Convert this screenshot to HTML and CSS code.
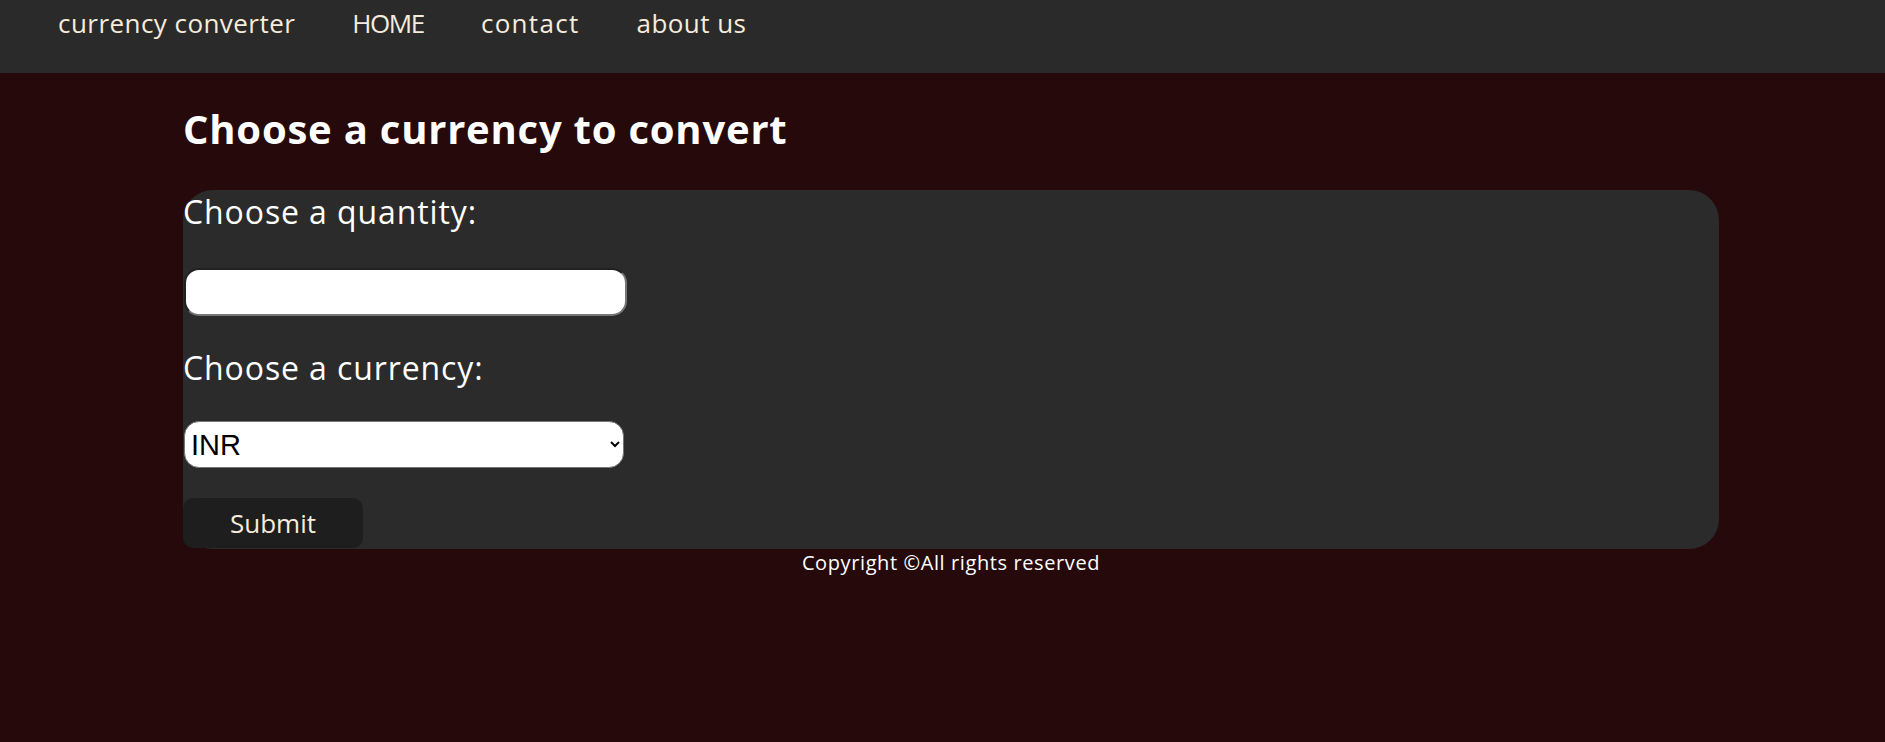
FILE: index.html
```html
<!DOCTYPE html>
<html lang="en">
<head>
<meta charset="utf-8">
<title>Currency Converter</title>
<link rel="stylesheet" href="styles.css">
</head>
<body>
<nav class="navbar">
  <a class="nav-link" href="#">currency converter</a>
  <a class="nav-link nav-caps" href="#">HOME</a>
  <a class="nav-link nav-wide" href="#">contact</a>
  <a class="nav-link" href="#">about us</a>
</nav>
<main class="main">
  <div class="container">
    <h1 class="title">Choose a currency to convert</h1>
    <form class="card">
      <label class="field-label" for="qty">Choose a quantity:</label>
      <input class="qty-input" id="qty" type="text">
      <label class="field-label label-second" for="cur">Choose a currency:</label>
      <select class="cur-select" id="cur">
        <option>INR</option>
        <option>USD</option>
        <option>EUR</option>
      </select>
      <button class="submit-btn" type="button">Submit</button>
    </form>
    <footer class="footer">Copyright ©All rights reserved</footer>
  </div>
</main>
</body>
</html>
```
FILE: styles.css
```css
html, body {
  margin: 0;
  padding: 0;
}
body {
  background: #25090b;
  font-family: "Open Sans", "Liberation Sans", sans-serif;
  color: #ffffff;
  min-height: 742px;
}
.navbar {
  background: #2a2a2a;
  height: 73px;
  box-sizing: border-box;
  display: flex;
  align-items: flex-start;
  gap: 57px;
  padding: 5px 0 0 58px;
}
.nav-link {
  color: #f7ecdc;
  text-decoration: none;
  font-size: 26px;
  line-height: 36px;
  letter-spacing: 0.45px;
}
.nav-caps {
  letter-spacing: -1.4px;
}
.nav-wide {
  letter-spacing: 1.3px;
}
.main {
  padding-left: 17px;
}
.container {
  max-width: 1536px;
  margin: 0 auto;
}
.title {
  margin: 32px 0 37px 0;
  font-size: 40px;
  line-height: 48px;
  font-weight: 700;
  letter-spacing: 0.78px;
  color: #ffffff;
}
.card {
  background: #2b2b2b;
  border-radius: 30px;
  display: flex;
  flex-direction: column;
  align-items: flex-start;
  height: 359px;
  box-sizing: border-box;
}
.field-label {
  font-size: 32px;
  line-height: 44px;
  letter-spacing: 0.9px;
  color: #ffffff;
}
.qty-input {
  margin: 34px 0 0 1px;
  width: 443px;
  height: 48px;
  box-sizing: border-box;
  border: 2px inset #767676;
  border-radius: 15px;
  background: #ffffff;
  font-size: 24px;
  padding: 0 8px;
}
.label-second {
  margin-top: 30px;
}
.cur-select {
  margin: 31px 0 0 1px;
  width: 440px;
  height: 47px;
  box-sizing: border-box;
  border: 1px solid #767676;
  border-radius: 15px;
  background-color: #ffffff;
  color: #000000;
  font-family: "Liberation Sans", Arial, sans-serif;
  font-size: 29px;
  padding: 0 2px;
}
.submit-btn {
  margin-top: 30px;
  width: 180px;
  height: 50px;
  border: none;
  border-radius: 10px;
  background: #1e1e1e;
  color: #f7ecdc;
  font-family: "Open Sans", "Liberation Sans", sans-serif;
  font-size: 26px;
  line-height: 50px;
  padding: 0;
}
.footer {
  text-align: center;
  font-size: 20px;
  line-height: 28px;
  letter-spacing: 0.6px;
  color: #ffffff;
}
```
